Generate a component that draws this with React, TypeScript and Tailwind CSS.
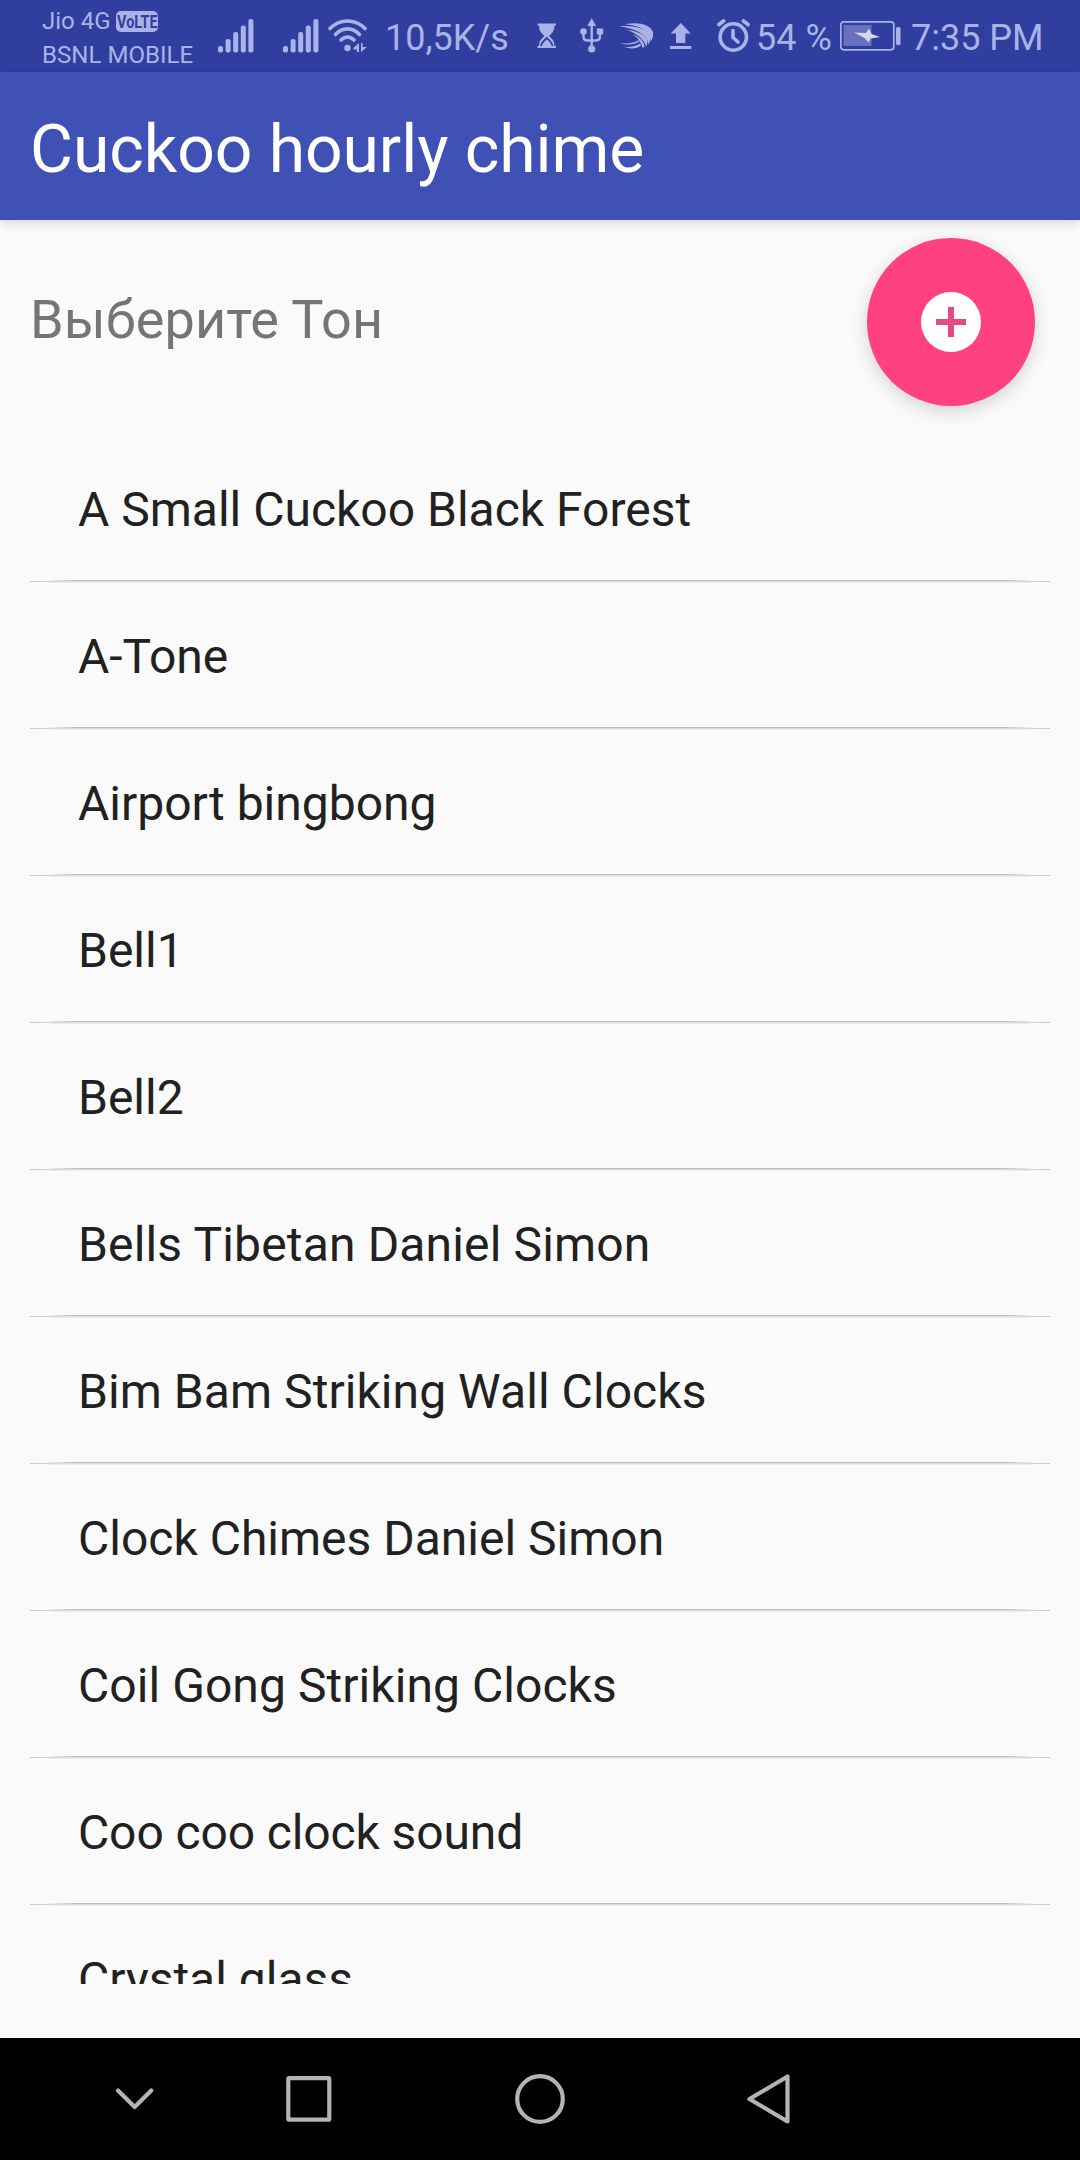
import { useState } from "react";

const tones = [
  { name: "A Small Cuckoo Black Forest" },
  { name: "A-Tone" },
  { name: "Airport bingbong" },
  { name: "Bell1" },
  { name: "Bell2" },
  { name: "Bells Tibetan Daniel Simon", tracking: "tracking-[0.16px]" },
  { name: "Bim Bam Striking Wall Clocks", tracking: "tracking-[0.06px]" },
  { name: "Clock Chimes Daniel Simon" },
  { name: "Coil Gong Striking Clocks", tracking: "tracking-[0.06px]" },
  { name: "Coo coo clock sound", tracking: "tracking-[-0.12px]" },
  { name: "Crystal glass" },
];

const SignalIcon = ({ className }: { className: string }) => (
  <svg className={className} width="36" height="34" viewBox="0 0 36 34">
    <g fill="currentColor">
      <rect x="0" y="27" width="5" height="6.5" rx="2" />
      <rect x="7.6" y="20" width="5" height="13.5" rx="2" />
      <rect x="15.2" y="13" width="5" height="20.5" rx="2" />
      <rect x="22.8" y="6.5" width="5" height="27" rx="2" />
      <rect x="30.4" y="0" width="5" height="33.5" rx="2" />
    </g>
  </svg>
);

const WifiIcon = () => (
  <svg className="ml-[9px] shrink-0" width="40" height="34" viewBox="0 0 40 34">
    <g fill="none" stroke="currentColor" strokeWidth="3.6" strokeLinecap="round">
      <path d="M2 9.5C12 -0.5 27 -0.5 37 9.5" />
      <path d="M7.5 15.5C14.5 8 24.5 8 31.5 15.5" />
      <path d="M13 21C17 17 22 17 26 21" />
    </g>
    <g fill="currentColor">
      <circle cx="19.5" cy="29" r="3.2" />
      <path d="M25.5 29L31 24V33H29V30.5H25.5Z" />
      <path d="M33 24V33L39 28H34.5V24Z" />
    </g>
  </svg>
);

const HourglassIcon = () => (
  <svg className="ml-[29px] shrink-0" width="20" height="26" viewBox="0 0 20 26">
    <path
      fill="currentColor"
      d="M0.5 0.5H19V2.5H17.5C17.5 8 15 10.5 12 13C15 15.5 17.5 18 17.5 23H19V25H0.5V23H2C2 18 4.5 15.5 7.5 13C4.5 10.5 2 8 2 2.5H0.5Z"
    />
    <path
      fill="none"
      stroke="#303f9f"
      strokeWidth="1.8"
      d="M4 23C4.5 19.5 7 17.5 9.8 15C12.6 17.5 15 19.5 15.5 23"
    />
  </svg>
);

const UsbIcon = () => (
  <svg className="ml-[23px] shrink-0" width="24" height="36" viewBox="0 0 24 36">
    <g fill="none" stroke="currentColor" strokeWidth="2.4">
      <path d="M11.7 5V31" />
      <path d="M3.5 14V18.5Q3.5 22.5 7.5 22.5H15.9Q19.9 22.5 19.9 18.5V14" />
    </g>
    <g fill="currentColor">
      <path d="M11.7 0L16 8H7.4Z" />
      <circle cx="3.5" cy="13.5" r="3.3" />
      <rect x="16.8" y="10.5" width="6.4" height="6" />
      <circle cx="11.7" cy="31" r="3.6" />
    </g>
  </svg>
);

const SwiftIcon = () => (
  <svg className="ml-[15px] shrink-0" width="35" height="26" viewBox="0 0 35 26">
    <g fill="currentColor">
      <path d="M6 1.2C19 -1.5 31 1 34 9C34.5 13 33.5 16.5 31.5 19C32.5 10 24 2.5 6 1.2Z" />
      <path d="M0 3.2C14 2.2 28 5 31 12.5C31.5 16 31 19 29.5 21.5C28.5 11.5 17 5.5 0 3.2Z" />
      <path d="M7 6.5C18 8 27 12 28.3 17.5C28.500 20 28 22 27 23.500C25 16 18 10.500 7 6.500Z" />
      <path d="M14 11.5C20 13.5 25 18 25.5 24L23.500 24.800C22 19.500 19.500 15.500 14 11.500Z" />
      <path d="M0 20.2C9 21 15 20 19.3 17.2L20.3 18.6C15.500 21.800 8 22.300 0 20.200Z" />
      <path d="M5 23.8C12 24.500 17 23.300 21 20.500L22 22.500C18 25.800 11 26.300 5 23.800Z" />
    </g>
  </svg>
);

const UploadIcon = () => (
  <svg className="ml-[16px] shrink-0" width="22" height="27" viewBox="0 0 22 27">
    <path
      fill="currentColor"
      d="M10.8 0L20.7 10.5H15.3V20H6V10.5H0.6ZM0 23H21.3V26H0Z"
    />
  </svg>
);

const AlarmIcon = () => (
  <svg className="ml-[25px] shrink-0" width="34" height="34" viewBox="0 0 34 34">
    <g fill="none" stroke="currentColor" strokeLinecap="round">
      <circle cx="16.3" cy="18" r="13.2" strokeWidth="3.6" />
      <path strokeWidth="3.8" d="M2 5.5L6.5 2M31 5.5L26.5 2" />
      <path strokeWidth="3.6" strokeLinejoin="round" d="M16 11.5V18.5L21 23" />
    </g>
  </svg>
);

const BatteryIcon = () => (
  <svg className="ml-[7px] shrink-0" width="62" height="30" viewBox="0 0 62 30">
    <rect x="0.8" y="0.8" width="53" height="28" rx="3" fill="none" stroke="currentColor" strokeWidth="1.7" />
    <rect x="3.5" y="4" width="28" height="21" fill="#6872bc" />
    <path fill="#d3d7f1" d="M14 11.500L26 12L29 7.500L31.500 13L40 16L30.500 17.500L28.500 21.500L24.500 17Z" />
    <rect x="56" y="6" width="4.5" height="18" rx="1.5" fill="currentColor" />
  </svg>
);

const StatusBar = () => (
  <div className="flex h-[72px] shrink-0 items-center bg-[#303f9f] pl-[42px] whitespace-nowrap text-[#aab3e8]">
    <div className="h-[72px] w-[176px] shrink-0 pt-[4px] text-[24px] leading-[34px]">
      <div className="flex items-center">
        <span className="w-[74px]">Jio 4G</span>
        <span className="flex h-[21px] w-[42px] items-center justify-center rounded-[5px] bg-[#aab3e8]">
          <span className="scale-x-[0.8] text-[18px] leading-[21px] font-bold text-[#303f9f]">
            VoLTE
          </span>
        </span>
      </div>
      <div className="tracking-[0.05px]">BSNL MOBILE</div>
    </div>
    <SignalIcon className="shrink-0" />
    <SignalIcon className="ml-[29px] shrink-0" />
    <WifiIcon />
    <span className="ml-[17px] w-[123px] shrink-0 pt-[4px] text-[36px]">10,5K/s</span>
    <HourglassIcon />
    <UsbIcon />
    <SwiftIcon />
    <UploadIcon />
    <AlarmIcon />
    <span className="ml-[5px] w-[77px] shrink-0 pt-[4px] text-[36px]">54 %</span>
    <BatteryIcon />
    <span className="ml-[9px] pt-[4px] text-[36px]">7:35 PM</span>
  </div>
);

// Thin line that tapers off towards both ends
const Divider = () => (
  <div className="h-[3px]">
    <div className="h-px bg-[linear-gradient(to_right,transparent_15px,#bdbdbd_45px,#bdbdbd_calc(100%-45px),transparent_calc(100%-15px))]" />
    <div className="h-px bg-[linear-gradient(to_right,#c8c8c8,#dedede_40px,#dedede_calc(100%-40px),#c8c8c8)]" />
    <div className="mx-[20px] h-px bg-[#ececec]" />
  </div>
);

const NavBar = () => (
  <div className="flex h-[122px] shrink-0 items-center bg-black text-[#b4b4b4]">
    <svg width="1080" height="122" viewBox="0 0 1080 122">
      <g fill="none" stroke="currentColor" strokeWidth="4.2" strokeLinejoin="round" strokeLinecap="round">
        <path d="M118 52.5L134.7 69L151.3 52.5" />
        <rect x="288.3" y="40.2" width="41" height="41.5" rx="1" />
        <circle cx="540" cy="61" r="22.8" />
        <path d="M787.5 38.5V83.5L749.5 61Z" />
      </g>
    </svg>
  </div>
);

export default function App() {
  const [selected, setSelected] = useState<string | null>(null);

  return (
    <div className="flex h-[2160px] w-[1080px] flex-col overflow-hidden bg-[#fafafa] font-['Roboto',sans-serif]">
      <StatusBar />

      {/* App bar */}
      <header className="z-10 flex h-[148px] shrink-0 items-center bg-[#3f51b5] pt-[7px] pl-[30px] shadow-[0_3px_10px_rgba(0,0,0,0.14)]">
        <h1 className="text-[66px] leading-[78px] tracking-[-0.05px] text-white">
          Cuckoo hourly chime
        </h1>
      </header>

      {/* Tone picker header */}
      <div className="flex h-[216px] shrink-0 items-start justify-between pr-[45px] pl-[30px]">
        <h2 className="pt-[68px] text-[54px] leading-[64px] tracking-[0.1px] text-[#757575]">
          Выберите Тон
        </h2>
        <button
          aria-label="Add tone"
          className="mt-[18px] flex h-[168px] w-[168px] items-center justify-center rounded-full bg-[#ff4081] shadow-[0_5px_18px_rgba(0,0,0,0.16)]"
        >
          <svg width="60" height="60" viewBox="0 0 60 60">
            <circle cx="30" cy="30" r="30" fill="#fff" />
            <path stroke="#e64a86" strokeWidth="6" d="M30 15V45M15 30H45" />
          </svg>
        </button>
      </div>

      {/* Tone list, the last row scrolls out of view */}
      <ul className="mx-[30px] h-[1548px] shrink-0 overflow-hidden">
        {tones.map(({ name, tracking }) => (
          <li
            key={name}
            aria-selected={selected === name}
            onClick={() => setSelected(name)}
            className={tracking}
          >
            <div className="h-[144px] pt-[2px] pl-[48px] text-[48px] leading-[144px] text-[#212121]">
              {name}
            </div>
            <Divider />
          </li>
        ))}
      </ul>

      <div className="grow" />
      <NavBar />
    </div>
  );
}
